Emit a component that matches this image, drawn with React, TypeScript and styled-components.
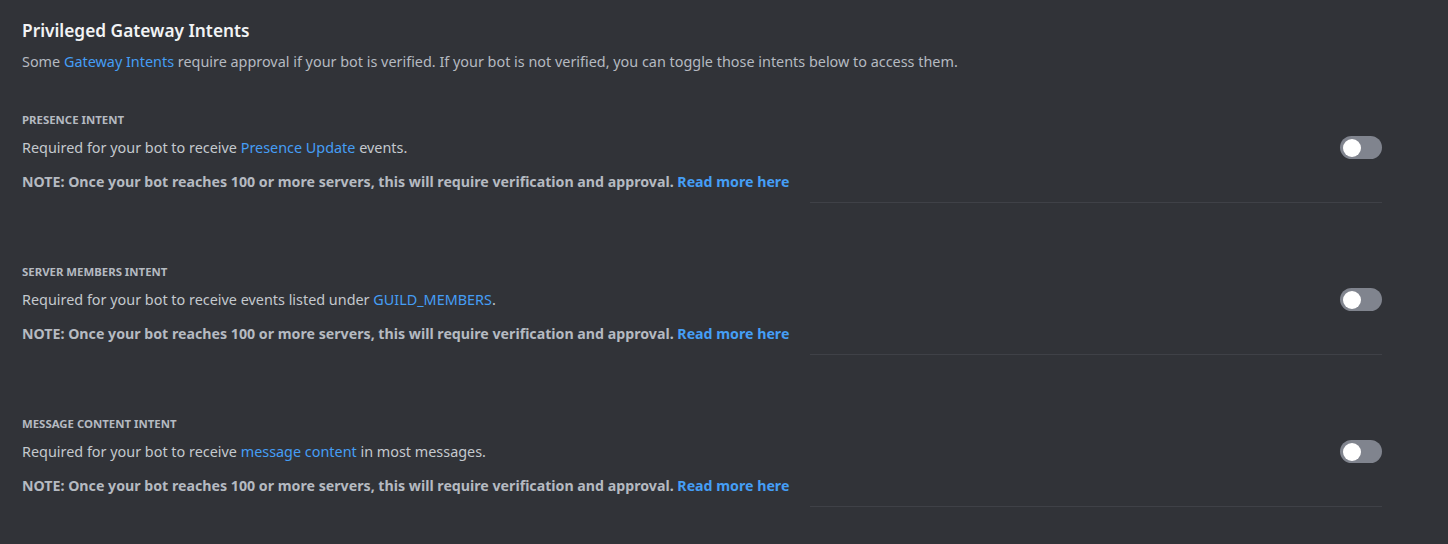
import React, { useState } from 'react';
import styled, { createGlobalStyle } from 'styled-components';

const GlobalStyle = createGlobalStyle`
  html, body {
    margin: 0;
    padding: 0;
    background: #313338;
  }
  body {
    font-family: 'Noto Sans', 'Open Sans', sans-serif;
  }
`;

const Page = styled.div`
  width: 1360px;
  padding: 19px 0 0 22px;
`;

const Title = styled.h2`
  margin: 0;
  font-size: 17.3px;
  line-height: 24px;
  font-weight: 600;
  color: #f2f3f5;
`;

const Lead = styled.p`
  margin: 9px 0 0;
  font-size: 14.4px;
  line-height: 20px;
  color: #b5bac1;
`;

const Link = styled.a`
  color: #459ef5;
  text-decoration: none;
  cursor: pointer;
`;

const List = styled.div`
  display: flex;
  flex-direction: column;
  margin-top: 40px;
  gap: 61px;
`;

const Intent = styled.section`
  display: flex;
  flex-direction: column;
`;

const Row = styled.div`
  display: flex;
  align-items: flex-start;
  justify-content: space-between;
`;

const Text = styled.div`
  display: flex;
  flex-direction: column;
`;

const Label = styled.h3`
  margin: 0;
  font-size: 11.4px;
  line-height: 16px;
  font-weight: 700;
  text-transform: uppercase;
  color: #b5bac1;
`;

const Body = styled.p`
  margin: 10px 0 0;
  font-size: 14.4px;
  line-height: 20px;
  color: #c4c9ce;
`;

const Note = styled.p`
  margin: 14px 0 0;
  font-size: 14.2px;
  line-height: 20px;
  font-weight: 700;
  color: #b5bac1;
`;

const Divider = styled.hr`
  align-self: flex-end;
  width: 572px;
  margin: 10px 0 0;
  border: none;
  border-top: 1px solid #3f4147;
`;

const Track = styled.button<{ $on: boolean }>`
  position: relative;
  flex: none;
  width: 42px;
  height: 23px;
  margin-top: 24px;
  padding: 0;
  border: none;
  border-radius: 12px;
  background: ${(p) => (p.$on ? '#23a559' : '#80848e')};
  cursor: pointer;
`;

const Knob = styled.span<{ $on: boolean }>`
  position: absolute;
  top: 2.5px;
  left: ${(p) => (p.$on ? '21px' : '3px')};
  width: 18px;
  height: 18px;
  border-radius: 50%;
  background: #ffffff;
  transition: left 0.15s ease;
`;

const Toggle = () => {
  const [on, setOn] = useState(false);
  return (
    <Track $on={on} onClick={() => setOn(!on)} aria-pressed={on}>
      <Knob $on={on} />
    </Track>
  );
};

const intents = [
  {
    label: 'Presence Intent',
    body: (
      <>
        Required for your bot to receive <Link>Presence Update</Link> events.
      </>
    ),
  },
  {
    label: 'Server Members Intent',
    body: (
      <>
        Required for your bot to receive events listed under <Link>GUILD_MEMBERS</Link>.
      </>
    ),
  },
  {
    label: 'Message Content Intent',
    body: (
      <>
        Required for your bot to receive <Link>message content</Link> in most messages.
      </>
    ),
  },
];

const App = () => (
  <>
    <GlobalStyle />
    <Page>
      <Title>Privileged Gateway Intents</Title>
      <Lead>
        Some <Link>Gateway Intents</Link> require approval if your bot is verified. If your bot is
        not verified, you can toggle those intents below to access them.
      </Lead>
      <List>
        {intents.map((intent) => (
          <Intent key={intent.label}>
            <Row>
              <Text>
                <Label>{intent.label}</Label>
                <Body>{intent.body}</Body>
                <Note>
                  NOTE: Once your bot reaches 100 or more servers, this will require verification
                  and approval. <Link>Read more here</Link>
                </Note>
              </Text>
              <Toggle />
            </Row>
            <Divider />
          </Intent>
        ))}
      </List>
    </Page>
  </>
);

export default App;
